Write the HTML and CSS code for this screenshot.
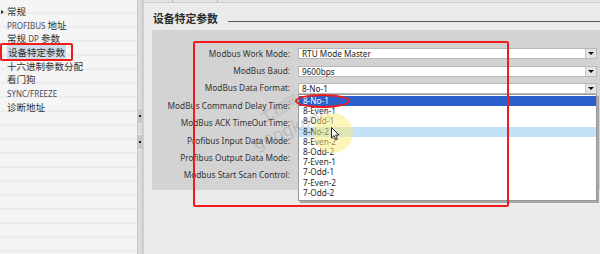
FILE: index.html
```html
<!DOCTYPE html>
<html lang="zh-CN">
<head>
<meta charset="utf-8">
<title>设备特定参数</title>
<link rel="stylesheet" href="styles.css">
</head>
<body>
<div class="app">
  <aside class="sidebar">
    <ul class="tree">
      <li class="tree-item"><span class="caret"></span>常规</li>
      <li class="tree-item"><span class="latin">PROFIBUS</span>&nbsp;地址</li>
      <li class="tree-item">常规 <span class="latin">DP</span> 参数</li>
      <li class="tree-item"><span class="selected">设备特定参数</span></li>
      <li class="tree-item">十六进制参数分配</li>
      <li class="tree-item">看门狗</li>
      <li class="tree-item"><span class="latin">SYNC/FREEZE</span></li>
      <li class="tree-item">诊断地址</li>
    </ul>
  </aside>
  <div class="vscroll"><span class="thumb"></span><span class="thumb"></span></div>
  <main class="main">
    <div class="tabstrip"><span class="tab"></span><span class="tab"></span></div>
    <div class="section-head"><h2 class="section-title">设备特定参数</h2><span class="rule"></span></div>
    <div class="panel">
      <div class="form">
        <label class="field-label">Modbus Work Mode:</label>
        <div class="select"><span class="value">RTU Mode Master</span><span class="arrow"></span></div>
        <label class="field-label">ModBus Baud:</label>
        <div class="select"><span class="value">9600bps</span><span class="arrow"></span></div>
        <label class="field-label">ModBus Data Format:</label>
        <div class="select"><span class="value">8-No-1</span><span class="arrow"></span></div>
        <label class="field-label">ModBus Command Delay Time:</label>
        <div class="select"><span class="value"></span><span class="arrow"></span></div>
        <label class="field-label">ModBus ACK TimeOut Time:</label>
        <div class="select"><span class="value"></span><span class="arrow"></span></div>
        <label class="field-label">Profibus Input Data Mode:</label>
        <div class="select"><span class="value"></span><span class="arrow"></span></div>
        <label class="field-label">Profibus Output Data Mode:</label>
        <div class="select"><span class="value"></span><span class="arrow"></span></div>
        <label class="field-label">Modbus Start Scan Control:</label>
        <div class="select"><span class="value"></span><span class="arrow"></span></div>
      </div>
    </div>
  </main>

  <ul class="dropdown">
    <li class="option active">8-No-1</li>
    <li class="option">8-Even-1</li>
    <li class="option">8-Odd-1</li>
    <li class="option hover">8-No-2</li>
    <li class="option">8-Even-2</li>
    <li class="option">8-Odd-2</li>
    <li class="option">7-Even-1</li>
    <li class="option">7-Odd-1</li>
    <li class="option">7-Even-2</li>
    <li class="option">7-Odd-2</li>
  </ul>

  <span class="watermark wm-cn">工控网</span>
  <span class="watermark wm-en">gongkong</span>
  <span class="spot"></span>
  <svg class="cursor" width="9" height="14" viewBox="0 0 9 14"><path d="M0.5 0.5 L0.5 11 L3 8.6 L4.8 12.8 L6.4 12.1 L4.7 8 L8 8 Z" fill="#fff" stroke="#111" stroke-width="0.9" stroke-linejoin="round"/></svg>

  <span class="mark mark-side"></span>
  <span class="mark mark-form"></span>
  <span class="mark mark-ellipse"></span>
</div>
</body>
</html>
```
FILE: styles.css
```css
* { box-sizing: border-box; }
html, body { margin: 0; padding: 0; }
body {
  width: 600px;
  height: 254px;
  overflow: hidden;
  background: #ebebeb;
  font-family: "Noto Sans", "Noto Sans CJK SC", sans-serif;
  color: #333;
}
.app {
  position: relative;
  display: flex;
  width: 600px;
  height: 254px;
}

/* sidebar tree */
.sidebar {
  width: 137px;
  flex: none;
  background: repeating-linear-gradient(to bottom, #f5f5f5 0, #f5f5f5 12px, #ececec 12px, #ececec 14px);
  padding-top: 5px;
}
.tree { list-style: none; margin: 0; padding: 0; }
.tree-item {
  position: relative;
  height: 13.7px;
  line-height: 13.7px;
  padding-left: 7px;
  font-family: "Noto Sans CJK SC", "Noto Sans", sans-serif;
  font-size: 9.5px;
  color: #2e2e2e;
  white-space: nowrap;
}
.latin { font-family: "Noto Sans", sans-serif; font-size: 8px; color: #4a4a5a; }
.caret {
  position: absolute;
  left: 1px;
  top: 5px;
  width: 0; height: 0;
  border-left: 3px solid #333;
  border-top: 2px solid transparent;
  border-bottom: 2px solid transparent;
}
.selected { background: #cfdbe8; padding: 0 1px; }

.vscroll {
  width: 6px;
  flex: none;
  background: #dadada;
  border-left: 1px solid #c4c4c4;
  border-right: 1px solid #c4c4c4;
  display: flex;
  flex-direction: column;
  padding-top: 108px;
  gap: 10px;
}
.thumb {
  height: 16px;
  background: #c8c8c8;
  border-top: 1px solid #e8e8e8;
  border-bottom: 1px solid #e8e8e8;
  position: relative;
}
.thumb::after {
  content: "";
  position: absolute;
  left: 1px; top: 6px;
  width: 2px; height: 2px;
  background: #222;
}

/* main area */
.main {
  flex: 1;
  background: #ebebeb;
  border-left: 1px solid #d4d4d4;
  padding-left: 8px;
  display: flex;
  flex-direction: column;
}
.tabstrip {
  height: 3px;
  margin-left: -8px;
  background: #e2e2e2;
  border-bottom: 1px solid #cdcdcd;
  display: flex;
  gap: 44px;
  padding-left: 28px;
}
.tab { width: 1px; height: 3px; background: #b8b8b8; }
.section-head {
  display: flex;
  align-items: flex-end;
  gap: 10px;
  height: 12px;
  margin-top: 9px;
  margin-bottom: 6px;
  padding-left: 1px;
}
.section-title {
  margin: 0;
  font-family: "Noto Sans CJK SC", sans-serif;
  font-size: 10.8px;
  line-height: 12px;
  font-weight: 700;
  color: #2a2a2a;
}
.rule { flex: 1; height: 1px; background: #5a5a5a; margin-bottom: 2px; }

.panel {
  height: 160px;
  background: #d3d3d3;
  padding: 15px 3px 0 0;
}
.form {
  display: grid;
  grid-template-columns: 138px 1fr;
  grid-auto-rows: 17.4px;
  column-gap: 8px;
  align-items: center;
}
.field-label {
  text-align: right;
  font-size: 8.3px;
  line-height: 10px;
  color: #333;
  white-space: nowrap;
}
.select {
  height: 11px;
  display: flex;
  background: #fff;
  border: 1px solid #b8b8b8;
}
.value {
  flex: 1;
  padding-left: 3px;
  font-size: 8.2px;
  line-height: 9px;
  color: #222;
}
.arrow {
  width: 11px;
  background: #e4e4e4;
  border-left: 1px solid #c6c6c6;
  display: flex;
  align-items: center;
  justify-content: center;
}
.arrow::after {
  content: "";
  border-top: 3px solid #111;
  border-left: 3px solid transparent;
  border-right: 3px solid transparent;
}

/* open dropdown list (overlay) */
.dropdown {
  position: absolute;
  left: 298px;
  top: 94px;
  width: 299px;
  margin: 0;
  padding: 1px 0 2px;
  list-style: none;
  background: #fff;
  border: 1px solid #9a9a9a;
  box-shadow: 2px 2px 0 #a6a6a6;
}
.option {
  height: 10.2px;
  line-height: 10.2px;
  padding-left: 4px;
  font-size: 8.2px;
  color: #2a2a2a;
}
.option.active { background: #2c5fcc; color: #fff; }
.option.hover { background: #c3e1f7; }

/* watermark, cursor spotlight */
.watermark {
  position: absolute;
  color: rgba(130, 130, 130, 0.32);
  white-space: nowrap;
  pointer-events: none;
}
.wm-en {
  left: 250px;
  top: 116px;
  font-family: "Noto Sans", sans-serif;
  font-size: 17px;
  transform: rotate(-24deg);
}
.wm-cn {
  left: 258px;
  top: 98px;
  font-family: "Noto Sans CJK SC", sans-serif;
  font-size: 14px;
  transform: rotate(-30deg);
}
.spot {
  position: absolute;
  left: 313px;
  top: 113px;
  width: 40px;
  height: 40px;
  border-radius: 50%;
  background: rgba(250, 238, 120, 0.5);
}
.cursor { position: absolute; left: 331px; top: 127px; }

/* red annotation marks */
.mark {
  position: absolute;
  border: 2px solid #f01c1c;
  border-radius: 2px;
}
.mark-side { left: 0; top: 43px; width: 73px; height: 18px; }
.mark-form { left: 193px; top: 41px; width: 316px; height: 166px; }
.mark-ellipse { left: 295px; top: 94px; width: 55px; height: 14px; border-radius: 50%; }
```
